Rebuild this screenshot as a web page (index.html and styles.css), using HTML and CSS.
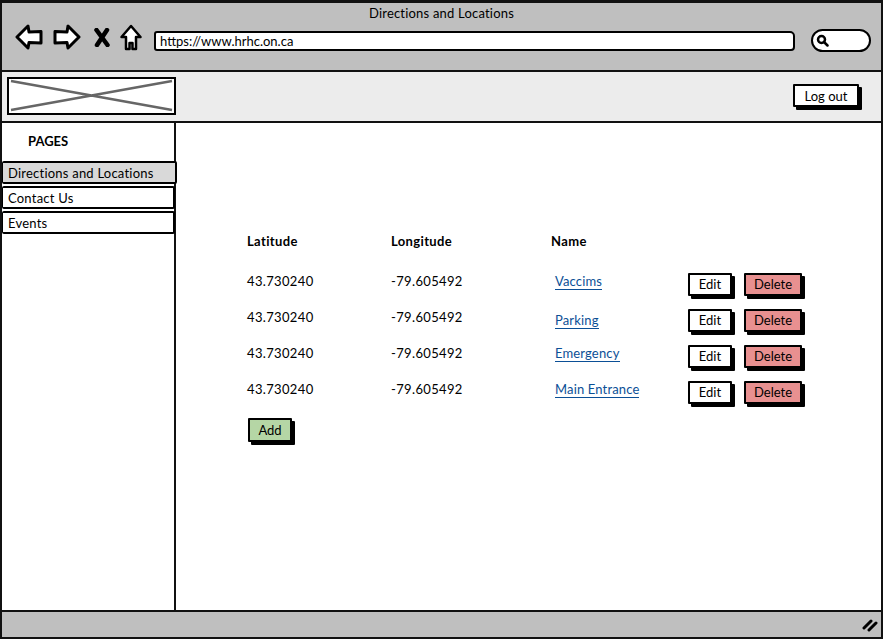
FILE: index.html
```html
<!DOCTYPE html>
<html lang="en">
<head>
    <meta charset="UTF-8">
    <title>Directions and Locations</title>
    <link rel="stylesheet" href="styles.css">
</head>
<body>
<div class="window">
    <header class="chrome">
        <div class="chrome-title">Directions and Locations</div>
        <div class="chrome-bar">
            <svg class="nav-icon" width="28" height="26" viewBox="0 0 28 26"><path d="M2 13 L13 2 L14 8 L26 7.500 L26 19 L14 18.500 L13 24 Z" fill="#fff" stroke="#000" stroke-width="3" stroke-linejoin="round"/></svg>
            <svg class="nav-icon" width="28" height="26" viewBox="0 0 28 26"><path d="M26 13 L15 2 L14 8 L2 7.500 L2 19 L14 18.500 L15 24 Z" fill="#fff" stroke="#000" stroke-width="3" stroke-linejoin="round"/></svg>
            <svg class="nav-icon stop" width="16" height="19" viewBox="0 0 16 19"><path d="M2.500 2 L13.500 17 M13 2 L3 17" fill="none" stroke="#000" stroke-width="4.500" stroke-linecap="round"/></svg>
            <svg class="nav-icon home" width="22" height="27" viewBox="0 0 22 27"><path d="M11 2 L20.500 13 L16 13 L16 25 L12.500 25 L12.500 19 L9.500 19 L9.500 25 L6 25 L6 13 L1.500 13 Z" fill="#fff" stroke="#000" stroke-width="2.500" stroke-linejoin="round"/></svg>
            <div class="url-box">https://www.hrhc.on.ca</div>
            <div class="search-box">
                <svg width="13" height="13" viewBox="0 0 13 13"><circle cx="5.500" cy="5.500" r="3.500" fill="#fff" stroke="#000" stroke-width="2.500"/><path d="M8 8 L11.500 11.500" stroke="#000" stroke-width="2.500" stroke-linecap="round"/></svg>
            </div>
        </div>
    </header>

    <div class="site-header">
        <svg class="logo" width="169" height="38" viewBox="0 0 169 38" preserveAspectRatio="none">
            <rect x="1" y="1" width="167" height="36" fill="#fff" stroke="#000" stroke-width="2"/>
            <path d="M4 4 L165 33 M4 33 L165 4" stroke="#666" stroke-width="2.500"/>
        </svg>
        <button class="btn logout">Log out</button>
    </div>

    <div class="main">
        <nav class="sidebar">
            <div class="sidebar-title">PAGES</div>
            <a class="side-item active">Directions and Locations</a>
            <a class="side-item">Contact Us</a>
            <a class="side-item">Events</a>
        </nav>

        <section class="content">
            <div class="locations">
                <div class="head">Latitude</div>
                <div class="head">Longitude</div>
                <div class="head">Name</div>
                <div></div>
                <div></div>

                <div>43.730240</div>
                <div>-79.605492</div>
                <div><a class="place">Vaccims</a></div>
                <div><button class="btn edit">Edit</button></div>
                <div><button class="btn delete">Delete</button></div>

                <div>43.730240</div>
                <div>-79.605492</div>
                <div><a class="place low">Parking</a></div>
                <div><button class="btn edit">Edit</button></div>
                <div><button class="btn delete">Delete</button></div>

                <div>43.730240</div>
                <div>-79.605492</div>
                <div><a class="place">Emergency</a></div>
                <div><button class="btn edit">Edit</button></div>
                <div><button class="btn delete">Delete</button></div>

                <div>43.730240</div>
                <div>-79.605492</div>
                <div><a class="place">Main Entrance</a></div>
                <div><button class="btn edit">Edit</button></div>
                <div><button class="btn delete">Delete</button></div>
            </div>
            <button class="btn add">Add</button>
        </section>
    </div>

    <footer class="status">
        <svg width="16" height="14" viewBox="0 0 16 14"><path d="M2 10 L9 3 M7 12 L14 5" stroke="#000" stroke-width="3" stroke-linecap="round"/></svg>
    </footer>
</div>
</body>
</html>
```

FILE: styles.css
```css
* {
    box-sizing: border-box;
}
html, body {
    height: 100%;
}
body {
    margin: 0;
    background-color: #fff;
    color: #000;
    font-family: Lato, "Noto Sans", sans-serif;
    font-size: 13px;
    overflow: hidden;
}
.window {
    display: flex;
    flex-direction: column;
    height: 639px;
    border: 2px solid #111;
    border-top-width: 3px;
}

/* browser chrome */
.chrome {
    height: 69px;
    flex: none;
    background-color: #bfbfbf;
    border-bottom: 2px solid #111;
}
.chrome-title {
    padding-top: 3px;
    height: 20px;
    line-height: 14px;
    text-align: center;
    letter-spacing: 0.2px;
}
.chrome-bar {
    display: flex;
    align-items: center;
    height: 28px;
    padding-left: 13px;
}
.nav-icon {
    flex: none;
    margin-right: 10px;
}
.stop {
    margin-left: 3px;
}
.home {
    margin-right: 12px;
}
.url-box {
    width: 641px;
    height: 20px;
    margin-top: 7px;
    padding-left: 4px;
    line-height: 16px;
    background-color: #fff;
    border: 2px solid #000;
    border-radius: 3px 5px 4px 3px;
}
.search-box {
    display: flex;
    align-items: center;
    width: 60px;
    height: 23px;
    margin-top: 6px;
    margin-left: 16px;
    padding-left: 3px;
    background-color: #fff;
    border: 2px solid #000;
    border-radius: 12px;
}

/* site header */
.site-header {
    display: flex;
    align-items: center;
    justify-content: space-between;
    height: 51px;
    flex: none;
    padding: 0 22px 0 5px;
    background-color: #ececec;
    border-bottom: 2px solid #111;
}
.logo {
    display: block;
    margin-bottom: 2px;
}

.btn {
    height: 23px;
    padding: 0;
    font-family: inherit;
    font-size: 13px;
    color: #000;
    background-color: #fff;
    border: 2px solid #000;
    border-radius: 1px;
    box-shadow: 3px 3px 0 #000;
}
.logout {
    width: 66px;
    margin-bottom: 2px;
}

/* page body */
.main {
    display: flex;
    flex: 1;
    min-height: 0;
}
.sidebar {
    width: 174px;
    flex: none;
    border-right: 2px solid #111;
}
.sidebar-title {
    height: 38px;
    padding: 9px 0 0 26px;
    font-weight: bold;
    font-size: 13px;
    line-height: 18px;
}
.side-item {
    display: block;
    width: 173px;
    height: 23px;
    margin-bottom: 2px;
    padding-left: 5px;
    line-height: 20px;
    letter-spacing: 0.22px;
    border: 2px solid #000;
    border-left-width: 1px;
    border-radius: 2px;
}
.side-item.active {
    background-color: #d9d9d9;
    width: 175px;
}

.content {
    flex: 1;
    padding: 108px 0 0 71px;
}
.locations {
    display: grid;
    grid-template-columns: 144px 160px 137px 56px 62px;
    grid-template-rows: 32px repeat(4, 36px);
    align-items: center;
    letter-spacing: 0.35px;
}
.head {
    font-weight: bold;
    align-self: start;
    line-height: 20px;
}
.place {
    margin-left: 4px;
    color: #0b4f96;
    text-decoration: none;
    border-bottom: 1px solid #0b4f96;
    letter-spacing: 0.15px;
}
.place.low {
    position: relative;
    top: 3px;
}
.edit {
    width: 44px;
    margin-top: 6px;
}
.delete {
    width: 58px;
    margin-top: 6px;
    background-color: #e89090;
}
.add {
    display: block;
    width: 44px;
    height: 24px;
    margin: 11px 0 0 1px;
    background-color: #b5d6a5;
}

.status {
    display: flex;
    align-items: center;
    justify-content: flex-end;
    height: 27px;
    flex: none;
    padding-right: 3px;
    background-color: #bfbfbf;
    border-top: 2px solid #111;
}
```
